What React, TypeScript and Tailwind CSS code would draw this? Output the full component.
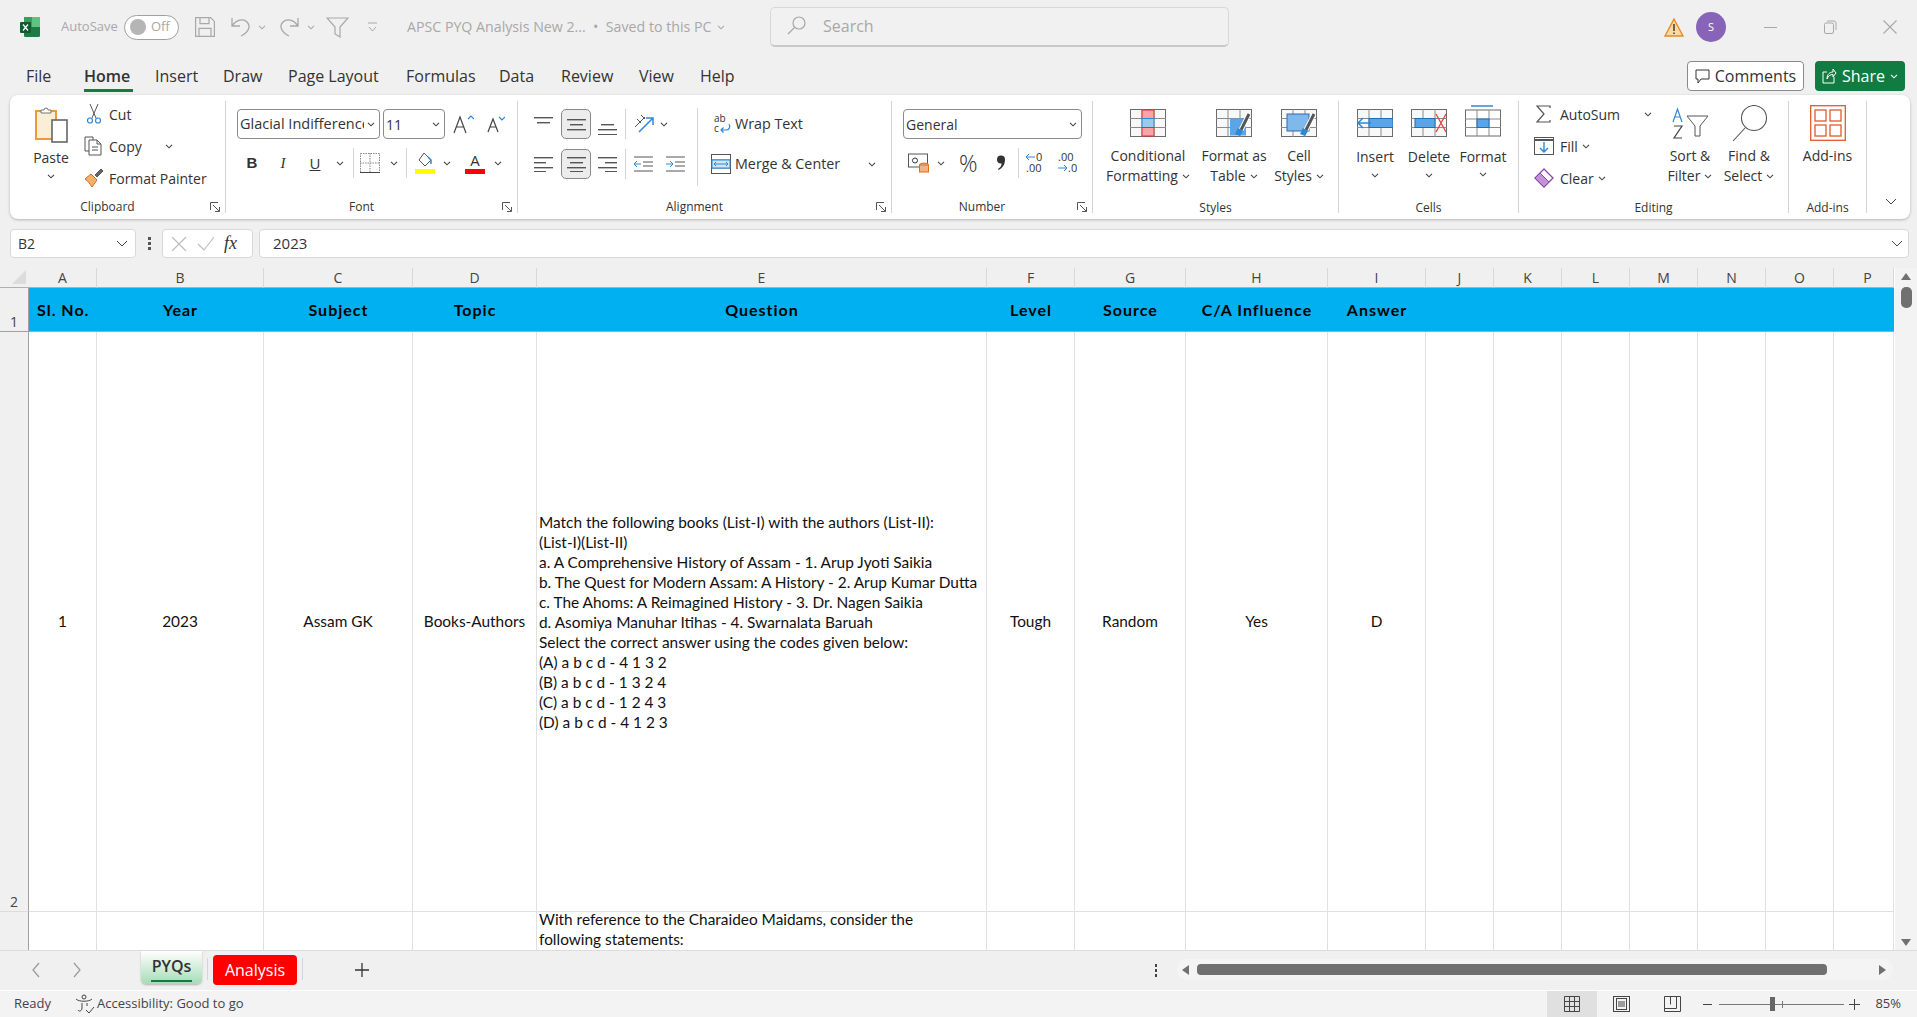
import React from 'react';

const ui = "font-['Open_Sans',sans-serif]";
const sheet = "font-['Lato',sans-serif]";

const Chev = ({ className = '', color = '#444' }: { className?: string; color?: string }) => (
  <svg width="8" height="5" viewBox="0 0 8 5" className={`shrink-0 ${className}`}>
    <path d="M1 .8l3 3 3-3" fill="none" stroke={color} strokeWidth="1.1" />
  </svg>
);

const Launcher = () => (
  <svg width="11" height="11" viewBox="0 0 11 11">
    <path d="M.5 8V.5H8M3 3l6 6M9.500 5v4.500H5" fill="none" stroke="#555" strokeWidth="1" />
  </svg>
);

const Sep = ({ className = '' }: { className?: string }) => <div className={`w-px bg-[#d5d5d5] ${className}`} />;

const Group = ({ w, label, launcher, low, children }: { w: string; label: string; launcher?: boolean; low?: boolean; children: React.ReactNode }) => (
  <div className={`${w} h-full shrink-0 flex flex-col border-r border-[#d4d4d4]`}>
    <div className="flex flex-1 min-h-0">{children}</div>
    <div className={`flex items-center h-[16px] text-[12px] text-[#333] ${low ? '-mb-[3px] pb-[1px]' : '-mb-[2px]'}`}>
      <div className="flex-1 text-center">{label}</div>
      {launcher && (
        <div className="w-[20px] flex justify-center">
          <Launcher />
        </div>
      )}
    </div>
  </div>
);

// horizontal lines of the alignment buttons: [y, x, width]
const Lines = ({ rows }: { rows: [number, number, number][] }) => (
  <svg width="19" height="16" viewBox="0 0 19 16">
    {rows.map(([y, x, w], i) => (
      <rect key={i} x={x} y={y} width={w} height="1.4" fill="#555" />
    ))}
  </svg>
);

const Grid = ({ children, w = 36, h = 28 }: { children?: React.ReactNode; w?: number; h?: number }) => (
  <svg width={w} height={h} viewBox="0 0 36 28">
    <rect x=".5" y=".5" width="35" height="27" fill="#f8f8f8" stroke="#6b6b6b" />
    <path d="M12 0v28M24 0v28M0 9.500h36M0 18.500h36" stroke="#8a8a8a" />
    {children}
  </svg>
);

const Label2 = ({ a, b, className = 'mt-[9px]' }: { a: string; b: string; className?: string }) => (
  <div className={`${className} flex flex-col items-center text-[14px] leading-[20px] text-[#333] whitespace-nowrap`}>
    <div>{a}</div>
    <div className="flex items-center gap-[4px]">
      {b}
      <Chev />
    </div>
  </div>
);

const colHeads = ['A', 'B', 'C', 'D', 'E', 'F', 'G', 'H', 'I', 'J', 'K', 'L', 'M', 'N', 'O', 'P'];
const heads = ['Sl. No.', 'Year', 'Subject', 'Topic', 'Question', 'Level', 'Source', 'C/A Influence', 'Answer', '', '', '', '', '', '', ''];
const question = [
  'Match the following books (List-I) with the authors (List-II):',
  '(List-I)(List-II)',
  'a. A Comprehensive History of Assam - 1. Arup Jyoti Saikia',
  'b. The Quest for Modern Assam: A History - 2. Arup Kumar Dutta',
  'c. The Ahoms: A Reimagined History - 3. Dr. Nagen Saikia',
  'd. Asomiya Manuhar Itihas - 4. Swarnalata Baruah',
  'Select the correct answer using the codes given below:',
  '(A) a b c d - 4 1 3 2',
  '(B) a b c d - 1 3 2 4',
  '(C) a b c d - 1 2 4 3',
  '(D) a b c d - 4 1 2 3',
];
const row2 = ['1', '2023', 'Assam GK', 'Books-Authors', '', 'Tough', 'Random', 'Yes', 'D'];
const tabs = [
  ['File', 'w-[58px]'],
  ['Home', 'w-[71px]'],
  ['Insert', 'w-[68px]'],
  ['Draw', 'w-[65px]'],
  ['Page Layout', 'w-[118px]'],
  ['Formulas', 'w-[93px]'],
  ['Data', 'w-[62px]'],
  ['Review', 'w-[78px]'],
  ['View', 'w-[61px]'],
  ['Help', 'w-[50px]'],
];

const TitleBar = () => (
  <div className="h-[54px] flex items-center text-[14px] text-[#a8a8a8]">
    <svg width="20" height="20" viewBox="0 0 20 20" className="ml-[20px]">
      <rect x="4" width="16" height="20" rx="1.500" fill="#1f7a45" />
      <rect x="12" width="8" height="10" fill="#5fc27e" />
      <rect x="4" width="8" height="10" fill="#33a060" />
      <rect y="5" width="11" height="11" rx="1" fill="#0f5c30" />
      <path d="M3 7.500l5 6M8 7.500l-5 6" stroke="#fff" strokeWidth="1.200" />
    </svg>
    <span className="ml-[21px] w-[63px] text-[13px]">AutoSave</span>
    <div className="w-[55px] h-[25px] rounded-full border border-[#a0a0a0] bg-white flex items-center pl-[5px] gap-[5px]">
      <div className="w-[16px] h-[16px] rounded-full bg-[#b5b5b5]" />
      <span className="text-[13px]">Off</span>
    </div>
    <svg width="20" height="20" viewBox="0 0 20 20" className="ml-[16px]" fill="none" stroke="#a8a8a8" strokeWidth="1.200">
      <path d="M.6.6h15l3.800 3.800v15H.6zM5 .6v6h9v-6M4 19.400v-8h12v8" />
    </svg>
    <svg width="20" height="20" viewBox="0 0 20 20" className="ml-[16px]" fill="none" stroke="#a8a8a8" strokeWidth="1.300">
      <path d="M1 1v8h8M1.500 8.500C5 3 12 1 16 5c4 4 2 10-6 14" />
    </svg>
    <Chev className="ml-[7px]" color="#a8a8a8" />
    <svg width="20" height="20" viewBox="0 0 20 20" className="ml-[13px]" fill="none" stroke="#a8a8a8" strokeWidth="1.300">
      <path d="M19 1v8h-8M18.500 8.500C15 3 8 1 4 5c-4 4-2 10 6 14" />
    </svg>
    <Chev className="ml-[8px]" color="#a8a8a8" />
    <svg width="23" height="21" viewBox="0 0 23 21" className="ml-[11px]" fill="none" stroke="#a8a8a8" strokeWidth="1.200">
      <path d="M1 1h21l-8 9v10l-5-3v-7z" />
    </svg>
    <svg width="9" height="10" viewBox="0 0 9 10" className="ml-[19px]" fill="none" stroke="#a8a8a8">
      <path d="M0 1h9M1 5l3.500 4L8 5" />
    </svg>
    <span className="ml-[30px] w-[304px] whitespace-nowrap text-[14.200px]">APSC PYQ Analysis New 2... &nbsp;•&nbsp; Saved to this PC</span>
    <Chev className="ml-[6px]" color="#a8a8a8" />
    <div className="ml-[45px] w-[459px] h-[40px] rounded-[5px] border border-[#d8d8d8] border-b-2 border-b-[#c8c8c8] bg-[#f1f1f1] flex items-center pl-[16px] pb-[2px] gap-[17px] text-[16px]">
      <svg width="19" height="19" viewBox="0 0 19 19" fill="none" stroke="#a8a8a8" strokeWidth="1.200">
        <circle cx="12" cy="7" r="6" />
        <path d="M7.500 11.500L1 18" />
      </svg>
      Search
    </div>
    <div className="flex-1" />
    <svg width="20" height="19" viewBox="0 0 20 19">
      <path d="M10 1l9 17H1z" fill="#fbd9a5" stroke="#e88a1d" strokeWidth="1.400" />
      <path d="M10 6v7M10 14.500v1.500" stroke="#333" strokeWidth="1.400" />
    </svg>
    <div className="ml-[12px] w-[30px] h-[30px] rounded-full bg-[#8764b8] text-white text-[11px] flex items-center justify-center">S</div>
    <div className="ml-[38px] w-[13px] h-px bg-[#a8a8a8]" />
    <svg width="13" height="14" viewBox="0 0 13 14" className="ml-[47px]" fill="none" stroke="#a8a8a8">
      <rect x=".5" y="3" width="9" height="10.500" rx="1.500" />
      <path d="M3 1h7a2 2 0 0 1 2 2v7" />
    </svg>
    <svg width="14" height="14" viewBox="0 0 14 14" className="ml-[46px] mr-[20px]" stroke="#a8a8a8" strokeWidth="1.100">
      <path d="M.5.5l13 13M13.500.5l-13 13" />
    </svg>
  </div>
);

const MenuBar = () => (
  <div className="h-[41px] pl-[26px] flex text-[16px] text-[#333]">
    {tabs.map(([t, w]) => (
      <div key={t} className={`${w} h-[38px] pt-[11px] leading-[22px] whitespace-nowrap`}>
        {t === 'Home' ? <div className="w-[49px] h-[27px] font-semibold border-b-[3px] border-[#107c41]">{t}</div> : t}
      </div>
    ))}
    <div className="flex-1" />
    <div className="mt-[7px] h-[30px] w-[117px] rounded-[4px] border border-[#8a8a8a] bg-white flex items-center justify-center gap-[5px]">
      <svg width="15" height="15" viewBox="0 0 15 15" fill="none" stroke="#333">
        <path d="M1 1h13v9H6l-3 4v-4H1z" />
      </svg>
      Comments
    </div>
    <div className="ml-[11px] mr-[12px] mt-[7px] h-[30px] w-[90px] rounded-[4px] bg-[#107c41] text-white flex items-center justify-center gap-[5px]">
      <svg width="15" height="16" viewBox="0 0 15 16" fill="none" stroke="#fff">
        <path d="M5 4H1v11h11V9M5 11c0-5 3-7 6-7V1l3 4-3 4V6.500c-3 0-5 1.500-6 4.500z" />
      </svg>
      Share
      <Chev color="#fff" />
    </div>
  </div>
);

const Clipboard = () => (
  <Group w="w-[216px]" label="Clipboard" launcher>
    <div className="ml-[21px] w-[40px] flex flex-col items-center text-[14px] text-[#333]">
      <svg width="33" height="37" viewBox="0 0 33 37" className="mt-[5px]">
        <rect x="1" y="5" width="20" height="28" fill="#fbeed7" stroke="#e89a3c" strokeWidth="2" />
        <path d="M6 7V4h3a2 2 0 0 1 4 0h3v3z" fill="#fff" stroke="#777" />
        <rect x="17" y="14" width="15" height="22" fill="#fff" stroke="#666" strokeWidth="1.600" />
      </svg>
      <div className="mt-[5px] leading-[20px]">Paste</div>
      <Chev className="mt-[6px]" />
    </div>
    <div className="ml-[13px] -mt-[1px] flex flex-col text-[14px] text-[#333]">
      <div className="h-[28px] flex items-center">
        <svg width="20" height="20" viewBox="0 0 20 20" fill="none">
          <path d="M6 0l6 14M14 0L8 14" stroke="#555" />
          <circle cx="6" cy="16.500" r="2.500" stroke="#2b88d8" strokeWidth="1.200" />
          <circle cx="14" cy="16.500" r="2.500" stroke="#2b88d8" strokeWidth="1.200" />
        </svg>
        <span className="ml-[5px]">Cut</span>
      </div>
      <div className="mt-[4px] h-[28px] flex items-center">
        <svg width="20" height="20" viewBox="0 0 20 20" fill="none" stroke="#555">
          <path d="M5 15H1V1h8v3M5 4h8l4 4v11H5zM13 4v4h4M8 11h6M8 14h6" />
        </svg>
        <span className="ml-[5px] w-[56px]">Copy</span>
        <Chev />
      </div>
      <div className="mt-[4px] h-[28px] flex items-center">
        <svg width="20" height="20" viewBox="0 0 20 20">
          <path d="M1 11l6-5 6 6-5 7C6 16 4 13 1 11z" fill="#f7b267" stroke="#d2691e" />
          <path d="M11 7l6-6 2 2-6 6z" fill="#666" stroke="#555" />
        </svg>
        <span className="ml-[5px] whitespace-nowrap">Format Painter</span>
      </div>
    </div>
  </Group>
);

const Combo = ({ w, text }: { w: string; text: string }) => (
  <div className={`${w} h-[30px] rounded-[4px] border border-[#8a8a8a] bg-white flex items-center pl-[2px] pr-[4px] text-[#333] overflow-hidden`}>
    <span className="flex-1 overflow-hidden whitespace-nowrap">{text}</span>
    <Chev className="ml-[3px]" />
  </div>
);

const ChevCell = ({ className = '' }: { className?: string }) => (
  <div className={`w-[18px] flex justify-center ${className}`}>
    <Chev />
  </div>
);

const Font = () => (
  <Group w="w-[292px]" label="Font" launcher>
    <div className="pl-[11px] pt-[8px] flex flex-col gap-[9px] text-[#333]">
      <div className="flex items-center">
        <Combo w="w-[143px] text-[14.500px]" text="Glacial Indifference" />
        <Combo w="ml-[3px] w-[62px] text-[14px]" text="11" />
        <svg width="21" height="20" viewBox="0 0 21 20" className="ml-[8px]" fill="none" stroke="#444" strokeWidth="1.200">
          <path d="M1 19L7 3l6 16M3.500 13h7" />
          <path d="M15 5l3-3 3 3" stroke="#2b88d8" />
        </svg>
        <svg width="18" height="18" viewBox="0 0 18 18" className="ml-[13px]" fill="none" stroke="#444" strokeWidth="1.200">
          <path d="M1 17L6 4l5 13M3 12h6" />
          <path d="M12 2l3 3 3-3" stroke="#2b88d8" />
        </svg>
      </div>
      <div className="flex items-center h-[30px] text-[15px]">
        <div className="w-[30px] text-center font-['Liberation_Sans',sans-serif] font-bold">B</div>
        <div className="w-[32px] text-center font-['Liberation_Serif',serif] italic">I</div>
        <div className="w-[32px] text-center underline">U</div>
        <ChevCell />
        <Sep className="ml-[4px] h-[30px]" />
        <svg width="20" height="20" viewBox="0 0 20 20" className="ml-[6px]" fill="none" stroke="#888" strokeDasharray="1.500 1">
          <rect x=".5" y=".5" width="19" height="19" />
          <path d="M10 0v20M0 10h20" />
          <path d="M0 19.500h20" stroke="#444" strokeDasharray="none" />
        </svg>
        <ChevCell className="ml-[5px]" />
        <Sep className="ml-[3px] h-[30px]" />
        <svg width="20" height="22" viewBox="0 0 20 22" className="ml-[8px]">
          <path d="M9 1l7 7-6 6-6-6z" fill="#fff" stroke="#555" />
          <path d="M13 5l3 3v4" fill="none" stroke="#2b88d8" strokeWidth="1.500" />
          <rect y="17" width="20" height="5" fill="#ffff00" />
        </svg>
        <ChevCell className="ml-[3px]" />
        <div className="ml-[9px] w-[20px] flex flex-col items-center leading-[17px]">
          A<div className="w-[20px] h-[5px] bg-[#ff0000]" />
        </div>
        <ChevCell className="ml-[4px]" />
      </div>
    </div>
  </Group>
);

const Alignment = () => (
  <Group w="w-[374px]" label="Alignment" launcher>
    <div className="pl-[16px] pt-[8px] w-[179px] flex flex-col gap-[10px]">
      <div className="flex items-center h-[30px]">
        <div className="w-[19px]">
          <Lines rows={[[1, 0, 19], [6, 3, 13]]} />
        </div>
        <div className="ml-[8px] w-[30px] h-[30px] rounded-[5px] border border-[#8a8a8a] bg-[#ececec] flex items-center justify-center">
          <Lines rows={[[3, 0, 19], [8, 3, 13], [13, 0, 19]]} />
        </div>
        <div className="ml-[7px] w-[19px] mt-[6px]">
          <Lines rows={[[5, 3, 13], [10, 0, 19], [15, 0, 19]]} />
        </div>
        <Sep className="ml-[8px] h-[30px]" />
        <svg width="20" height="20" viewBox="0 0 20 20" className="ml-[8px]" fill="none">
          <path d="M1 13L11 3M3 5l4 4M7 1l4 4" stroke="#555" />
          <path d="M5 18L18 5M12 4h7v7" stroke="#2b88d8" strokeWidth="1.500" />
        </svg>
        <Chev className="ml-[6px]" />
      </div>
      <div className="flex items-center h-[30px]">
        <div className="w-[19px]">
          <Lines rows={[[1, 0, 19], [6, 0, 12], [11, 0, 19], [15, 0, 12]]} />
        </div>
        <div className="ml-[8px] w-[30px] h-[30px] rounded-[5px] border border-[#8a8a8a] bg-[#ececec] flex items-center justify-center">
          <Lines rows={[[1, 0, 19], [6, 3, 13], [11, 0, 19], [15, 3, 13]]} />
        </div>
        <div className="ml-[7px] w-[19px]">
          <Lines rows={[[1, 0, 19], [6, 7, 12], [11, 0, 19], [15, 7, 12]]} />
        </div>
        <Sep className="ml-[8px] h-[30px]" />
        <svg width="19" height="16" viewBox="0 0 19 16" className="ml-[8px]">
          <path d="M0 1h19M9 6h10M9 10h10M0 15h19" stroke="#555" />
          <path d="M7 8H0M3 5L0 8l3 3" stroke="#2b88d8" fill="none" />
        </svg>
        <svg width="19" height="16" viewBox="0 0 19 16" className="ml-[13px]">
          <path d="M0 1h19M9 6h10M9 10h10M0 15h19" stroke="#555" />
          <path d="M0 8h7M4 5l3 3-3 3" stroke="#2b88d8" fill="none" />
        </svg>
      </div>
    </div>
    <Sep className="mt-[7px] h-[78px]" />
    <div className="ml-[13px] pt-[8px] flex flex-col gap-[10px] text-[14.300px] text-[#333]">
      <div className="flex items-center h-[30px]">
        <svg width="20" height="20" viewBox="0 0 20 20" className="ml-[2px] mr-[2px]" fill="none">
          <text x="1" y="8" fontSize="10" fill="#333" fontFamily="Open Sans">ab</text>
          <text x="1" y="18" fontSize="10" fill="#333" fontFamily="Open Sans">c</text>
          <path d="M16 10c2 3 0 6-3 6H8M10.500 13.500L8 16l2.500 2.500" stroke="#2b88d8" strokeWidth="1.200" />
        </svg>
        Wrap Text
      </div>
      <div className="flex items-center h-[30px]">
        <svg width="20" height="20" viewBox="0 0 20 20" className="mr-[4px]">
          <rect x=".5" y=".5" width="19" height="19" fill="#fff" stroke="#555" />
          <path d="M0 6h20M0 14h20" stroke="#555" />
          <rect x="1" y="6" width="18" height="8" fill="#cfe6f7" stroke="#2b88d8" />
          <path d="M3 10h14M5 8l-2 2 2 2M15 8l2 2-2 2" stroke="#2b88d8" fill="none" />
        </svg>
        <span className="w-[133px] whitespace-nowrap">Merge &amp; Center</span>
        <Chev />
      </div>
    </div>
  </Group>
);

const NumberGroup = () => (
  <Group w="w-[201px]" label="Number" launcher>
    <div className="pl-[11px] pt-[8px] flex flex-col gap-[9px]">
      <Combo w="w-[179px] text-[14px]" text="General" />
      <div className="flex items-center h-[30px] text-[#333]">
        <svg width="22" height="22" viewBox="0 0 22 22" className="ml-[5px]" fill="none">
          <rect x=".5" y="2" width="19" height="13" fill="#fff" stroke="#555" />
          <circle cx="7" cy="8.500" r="2.500" stroke="#333" />
          <ellipse cx="16" cy="13" rx="4.500" ry="2" fill="#f4b183" stroke="#d9701c" />
          <rect x="11.500" y="13" width="9" height="7" fill="#f4b183" stroke="#d9701c" />
        </svg>
        <Chev className="ml-[7px]" />
        <span className="ml-[14px] w-[20px] text-[23px] leading-none font-light">%</span>
        <svg width="10" height="16" viewBox="0 0 10 16" className="ml-[17px]">
          <circle cx="5" cy="4.500" r="4" fill="#333" />
          <path d="M8.500 5c1 4-2 8-6 10l-.5-1c3-2 4-4 3.500-7z" fill="#333" />
        </svg>
        <Sep className="ml-[12px] h-[30px]" />
        <svg width="20" height="22" viewBox="0 0 20 22" className="ml-[6px]">
          <text x="11" y="9" fontSize="11" fill="#333" fontFamily="Open Sans">0</text>
          <text x="1" y="20" fontSize="11" fill="#333" fontFamily="Open Sans">.00</text>
          <path d="M10 5H1M4 2L1 5l3 3" fill="none" stroke="#2b88d8" />
        </svg>
        <svg width="20" height="22" viewBox="0 0 20 22" className="ml-[12px]">
          <text x="1" y="9" fontSize="11" fill="#333" fontFamily="Open Sans">.00</text>
          <text x="11" y="20" fontSize="11" fill="#333" fontFamily="Open Sans">.0</text>
          <path d="M1 16h9M7 13l3 3-3 3" fill="none" stroke="#2b88d8" />
        </svg>
      </div>
    </div>
  </Group>
);

const Brush = () => (
  <>
    <path d="M25 21l8-16" stroke="#fff" strokeWidth="5" />
    <path d="M25 21l8-16" stroke="#555" strokeWidth="3" />
    <path d="M22 19l5 3-3 5-5-2z" fill="#2b88d8" />
  </>
);

const Styles = () => (
  <Group w="w-[246px]" label="Styles" low>
    <div className="pl-[15px] pt-[8px] flex">
      <div className="w-[80px] flex flex-col items-center">
        <Grid>
          <rect x="12" y="1" width="12" height="8.500" fill="#f8a5a8" stroke="#d13438" />
          <rect x="12" y="9.500" width="12" height="9" fill="#9cc9ee" stroke="#2b88d8" />
          <rect x="12" y="18.500" width="12" height="8.500" fill="#f8a5a8" stroke="#d13438" />
        </Grid>
        <Label2 a="Conditional" b="Formatting" />
      </div>
      <div className="w-[92px] flex flex-col items-center">
        <Grid>
          <rect x="14" y="9.500" width="16" height="17" fill="#5ba4e6" />
          <Brush />
        </Grid>
        <Label2 a="Format as" b="Table" />
      </div>
      <div className="w-[38px] flex flex-col items-center">
        <Grid>
          <rect x="6" y="5" width="22" height="17" fill="#7fb8ea" stroke="#2b6cb0" />
          <Brush />
        </Grid>
        <Label2 a="Cell" b="Styles" />
      </div>
    </div>
  </Group>
);

const CellBtn = ({ label, icon, format }: { label: string; icon: React.ReactNode; format?: boolean }) => (
  <div className="w-[54px] flex flex-col items-center text-[14px] text-[#333]">
    {icon}
    <div className="mt-[10px] leading-[20px]">{label}</div>
    <Chev className={format ? 'mt-[5px]' : 'mt-[6px]'} />
  </div>
);

const Cells = () => (
  <Group w="w-[180px]" label="Cells" low>
    <div className="pl-[9px] pt-[8px] flex">
      <CellBtn
        label="Insert"
        icon={
          <Grid>
            <rect x="12" y="9.500" width="24" height="9" fill="#5ba4e6" stroke="#1f6fb5" />
            <path d="M14 14H2M6 9l-5 5 5 5" fill="none" stroke="#2b88d8" strokeWidth="1.500" />
          </Grid>
        }
      />
      <CellBtn
        label="Delete"
        icon={
          <Grid>
            <rect x="4" y="9.500" width="20" height="9" fill="#5ba4e6" stroke="#1f6fb5" />
            <path d="M25 5l10 18M35 5L25 23" stroke="#e8403f" strokeWidth="1.300" />
          </Grid>
        }
      />
      <CellBtn
        format
        label="Format"
        icon={
          <svg width="36" height="32" viewBox="0 0 36 32" className="-mt-[4px]">
            <path d="M6 1h22" stroke="#2b88d8" strokeWidth="1.500" />
            <rect x=".5" y="5" width="35" height="26" fill="#fff" stroke="#6b6b6b" />
            <path d="M12 5v26M24 5v26M0 14h36M0 22.500h36" stroke="#8a8a8a" />
            <rect x="12" y="14" width="12" height="8.500" fill="#5ba4e6" stroke="#1f6fb5" />
          </svg>
        }
      />
    </div>
  </Group>
);

const Editing = () => (
  <Group w="w-[270px]" label="Editing" low>
    <div className="pl-[15px] -mt-[1px] w-[141px] flex flex-col text-[14px] text-[#333]">
      <div className="h-[28px] flex items-center">
        <svg width="20" height="18" viewBox="0 0 20 18" fill="none" stroke="#555" strokeWidth="1.200">
          <path d="M16 3V1H3l7 8-7 8h13v-2" />
        </svg>
        <span className="ml-[6px] w-[84px]">AutoSum</span>
        <Chev />
      </div>
      <div className="mt-[4px] h-[28px] flex items-center">
        <svg width="20" height="18" viewBox="0 0 20 18" fill="none">
          <rect x=".5" y=".5" width="19" height="17" fill="#fff" stroke="#555" />
          <path d="M0 3h20" stroke="#555" strokeWidth="2" />
          <path d="M10 5v10M6 11l4 4 4-4" stroke="#2b88d8" strokeWidth="1.400" />
        </svg>
        <span className="ml-[6px]">Fill</span>
        <Chev className="ml-[4px]" />
      </div>
      <div className="mt-[4px] h-[28px] flex items-center">
        <svg width="20" height="20" viewBox="0 0 20 20">
          <path d="M10 1l9 9-9 9-9-9z" fill="#fff" stroke="#8e44ad" strokeWidth="1.300" />
          <path d="M1 10l5-5 9 9-5 5z" fill="#c391d6" stroke="#8e44ad" />
        </svg>
        <span className="ml-[6px]">Clear</span>
        <Chev className="ml-[4px]" />
      </div>
    </div>
    <div className="w-[60px] flex flex-col items-center">
      <svg width="37" height="33" viewBox="0 0 37 33" className="mt-[6px]" fill="none">
        <path d="M1 15l4.500-13L10 15M2.500 10h6" stroke="#2b88d8" strokeWidth="1.200" />
        <path d="M2 19h8l-8 12h8" stroke="#444" strokeWidth="1.200" />
        <path d="M15 9h21l-8 10v10h-5V19z" stroke="#555" fill="#fff" />
      </svg>
      <Label2 a="Sort &" b="Filter" className="mt-[6px]" />
    </div>
    <div className="w-[58px] flex flex-col items-center">
      <svg width="37" height="37" viewBox="0 0 37 37" className="mt-[4px]" fill="none" stroke="#555" strokeWidth="1.100">
        <circle cx="23" cy="13" r="12.500" fill="#fff" />
        <path d="M14 23L2 36" />
      </svg>
      <Label2 a="Find &" b="Select" className="mt-[4px]" />
    </div>
  </Group>
);

const AddIns = () => (
  <Group w="w-[78px]" label="Add-ins" low>
    <div className="w-full pt-[4px] flex flex-col items-center text-[14px] text-[#333]">
      <svg width="36" height="36" viewBox="0 0 36 36" fill="none" stroke="#e05a2b" strokeWidth="1.300">
        <rect x=".7" y=".7" width="34.600" height="34.600" />
        <rect x="5" y="5" width="11" height="11" />
        <rect x="20" y="5" width="11" height="11" />
        <rect x="5" y="20" width="11" height="11" />
        <rect x="20" y="20" width="11" height="11" />
      </svg>
      <div className="mt-[5px] leading-[20px]">Add-ins</div>
    </div>
  </Group>
);

const Ribbon = () => (
  <div className="mr-[7px] ml-[10px] h-[124px] rounded-[8px] bg-white shadow-[0_1px_3px_rgba(0,0,0,0.25)] py-[6px] flex">
    <Clipboard />
    <Font />
    <Alignment />
    <NumberGroup />
    <Styles />
    <Cells />
    <Editing />
    <AddIns />
    <div className="flex-1 pl-[18px] flex items-end pb-[8px]">
      <svg width="12" height="7" viewBox="0 0 12 7" fill="none" stroke="#444">
        <path d="M1 1l5 5 5-5" />
      </svg>
    </div>
  </div>
);

const FormulaBar = () => (
  <div className="h-[49px] pt-[10px] pl-[10px] pr-[8px] flex text-[14px] text-[#333]">
    <div className="w-[126px] h-[29px] rounded-[4px] border border-[#d8d8d8] bg-white flex items-center pl-[7px] pr-[7px]">
      <span className="flex-1">B2</span>
      <svg width="12" height="7" viewBox="0 0 12 7" fill="none" stroke="#444">
        <path d="M1 1l5 5 5-5" />
      </svg>
    </div>
    <div className="w-[26px] h-[29px] flex flex-col items-center justify-center gap-[2px]">
      <div className="w-[3px] h-[3px] bg-[#555]" />
      <div className="w-[3px] h-[3px] bg-[#555]" />
      <div className="w-[3px] h-[3px] bg-[#555]" />
    </div>
    <div className="w-[91px] h-[29px] rounded-[4px] border border-[#d8d8d8] bg-white flex items-center pl-[8px]">
      <svg width="16" height="16" viewBox="0 0 16 16" stroke="#bbb" strokeWidth="1.100">
        <path d="M1 1l14 14M15 1L1 15" />
      </svg>
      <svg width="18" height="16" viewBox="0 0 18 16" className="ml-[10px]" fill="none" stroke="#bbb" strokeWidth="1.100">
        <path d="M1 8l6 6L17 1" />
      </svg>
      <span className="ml-[9px] font-['Liberation_Serif',serif] italic text-[18px] text-[#333]">fx</span>
    </div>
    <div className="ml-[6px] flex-1 h-[29px] rounded-[4px] border border-[#d8d8d8] bg-white flex items-center pl-[13px] pr-[5px] text-[15px]">
      <span className="flex-1">2023</span>
      <svg width="12" height="7" viewBox="0 0 12 7" fill="none" stroke="#444">
        <path d="M1 1l5 5 5-5" />
      </svg>
    </div>
  </div>
);

const SheetGrid = () => (
  <div className="flex h-[682px]">
    <div className="w-[1895px] overflow-hidden grid grid-cols-[29px_68px_167px_149px_124px_450px_88px_111px_142px_98px_repeat(6,68px)_60px] grid-rows-[20px_44px_580px_38px] bg-white">
      <div className="bg-[#f0f0f0] border-b border-[#b0b0b0] flex items-end justify-end pr-[3px] pb-[3px]">
        <div className="w-0 h-0 border-l-[14px] border-l-transparent border-b-[14px] border-b-[#dcdcdc]" />
      </div>
      {colHeads.map((c) => (
        <div key={c} className={`bg-[#f0f0f0] border-b border-b-[#b0b0b0] border-r border-r-[#d9d9d9] text-[14px] text-[#444] flex items-center justify-center ${c === 'P' ? 'pl-[8px]' : ''}`}>
          {c}
        </div>
      ))}
      <div className="bg-[#f0f0f0] border-b border-[#a0a0a0] border-r text-[14px] text-[#444] flex items-end pl-[10px] leading-[18px]">1</div>
      {heads.map((h, i) => (
        <div key={i} className={`bg-[#00b0f0] border-b border-[#a8a8a8] flex items-center text-[16px] font-bold text-black tracking-[1px] whitespace-nowrap ${sheet} ${i === 0 ? 'justify-start pl-[8px]' : 'justify-center'}`}>
          {h}
        </div>
      ))}
      <div className="bg-[#f0f0f0] border-b border-[#dcdcdc] border-r border-r-[#a0a0a0] text-[14px] text-[#444] flex items-end pl-[10px] leading-[18px]">2</div>
      {colHeads.map((c, i) => (
        <div key={c} className={`border-b border-r border-[#e0e0e0] flex items-center justify-center text-[15.400px] text-[#111] whitespace-nowrap ${sheet}`}>
          {i === 4 ? (
            <div className="w-full pl-[2px] leading-[20px]">
              {question.map((q) => (
                <div key={q}>{q}</div>
              ))}
            </div>
          ) : (
            row2[i]
          )}
        </div>
      ))}
      <div className="bg-[#f0f0f0] border-r border-r-[#a0a0a0]" />
      {colHeads.map((c, i) => (
        <div key={c} className={`border-r border-[#e0e0e0] text-[15.400px] text-[#111] leading-[20px] overflow-hidden ${sheet}`}>
          {i === 4 && (
            <div className="pl-[2px] -mt-[3px] whitespace-nowrap">
              <div>With reference to the Charaideo Maidams, consider the</div>
              <div>following statements:</div>
            </div>
          )}
        </div>
      ))}
    </div>
    <div className="flex-1 bg-[#f3f3f3] flex flex-col items-center pt-[5px]">
      <div className="w-0 h-0 border-x-[5px] border-x-transparent border-b-[7px] border-b-[#707070]" />
      <div className="mt-[7px] w-[11px] h-[21px] rounded-[5px] bg-[#707070]" />
      <div className="flex-1" />
      <div className="mb-[4px] w-0 h-0 border-x-[5px] border-x-transparent border-t-[7px] border-t-[#707070]" />
    </div>
  </div>
);

const TabBar = () => (
  <div className="h-[40px] border-t border-[#dcdcdc] bg-[#f0f0f0] flex text-[#333]">
    <svg width="10" height="16" viewBox="0 0 10 16" className="ml-[31px] mt-[11px]" fill="none" stroke="#999" strokeWidth="1.200">
      <path d="M8 1L2 8l6 7" />
    </svg>
    <svg width="10" height="16" viewBox="0 0 10 16" className="ml-[31px] mt-[11px]" fill="none" stroke="#999" strokeWidth="1.200">
      <path d="M2 1l6 7-6 7" />
    </svg>
    <div className="ml-[59px] w-[61px] h-[33px] rounded-b-[5px] bg-gradient-to-b from-white to-[#a3dcb6] shadow-[0_1px_2px_rgba(0,0,0,0.25)] flex flex-col items-center">
      <div className="pt-[1px] text-[16px] leading-[28px] font-semibold text-[#333]">PYQs</div>
      <div className="w-[41px] h-[2px] bg-[#107c41]" />
    </div>
    <Sep className="ml-[5px] mt-[7px] h-[22px]" />
    <div className="ml-[5px] mt-[4px] w-[84px] h-[30px] rounded-[4px] bg-[#ff0000] text-white text-[16px] flex items-center justify-center">Analysis</div>
    <Sep className="ml-[5px] mt-[7px] h-[22px]" />
    <svg width="16" height="16" viewBox="0 0 16 16" className="ml-[51px] mt-[11px]" stroke="#333" strokeWidth="1.300">
      <path d="M8 1v14M1 8h14" />
    </svg>
    <div className="ml-[784px] w-[4px] flex flex-col items-center justify-center gap-[2px] h-[38px]">
      <div className="w-[2px] h-[3px] bg-[#444]" />
      <div className="w-[2px] h-[3px] bg-[#444]" />
      <div className="w-[2px] h-[3px] bg-[#444]" />
    </div>
    <div className="ml-[19px] mt-[8px] w-[716px] h-[21px] rounded-full bg-[#f4f4f4] flex items-center pl-[5px] pr-[7px]">
      <div className="w-0 h-0 border-y-[5px] border-y-transparent border-r-[7px] border-r-[#707070]" />
      <div className="ml-[8px] w-[630px] h-[11px] rounded-[4px] bg-[#707070]" />
      <div className="flex-1" />
      <div className="w-0 h-0 border-y-[5px] border-y-transparent border-l-[7px] border-l-[#707070]" />
    </div>
  </div>
);

const StatusBar = () => (
  <div className="h-[27px] border-t border-white bg-[#f3f3f3] flex items-center text-[13px] text-[#444]">
    <span className="ml-[14px]">Ready</span>
    <svg width="20" height="20" viewBox="0 0 20 20" className="ml-[24px]" fill="none" stroke="#444">
      <circle cx="9" cy="3" r="2" />
      <path d="M1 5c3 3 13 3 16 0M7 9v5c0 3-3 4-4 2M12 9v3M11 16l3 3 5-6" />
    </svg>
    <span className="ml-[2px]">Accessibility: Good to go</span>
    <div className="flex-1" />
    <div className="w-[50px] h-[26px] bg-[#e0e0e0] flex items-center justify-center">
      <svg width="16" height="16" viewBox="0 0 16 16" fill="none" stroke="#444">
        <path d="M.5.5h15v15H.5zM5.500 0v16M10.500 0v16M0 5.500h16M0 10.500h16" />
      </svg>
    </div>
    <svg width="17" height="16" viewBox="0 0 17 16" className="ml-[16px]" fill="none" stroke="#444">
      <rect x=".5" y=".5" width="16" height="15" />
      <rect x="3.500" y="2.500" width="10" height="11" />
      <path d="M5 6h7M5 8h7M5 10h7" />
    </svg>
    <svg width="17" height="16" viewBox="0 0 17 16" className="ml-[34px]" fill="none" stroke="#444">
      <path d="M.5.5h16v15H.5zM.5 12.500h12V.5M6.500.5v8" />
    </svg>
    <div className="ml-[22px] w-[9px] h-px bg-[#444]" />
    <div className="ml-[7px] w-[125px] h-[13px] flex items-center relative">
      <div className="w-full h-px bg-[#777]" />
      <div className="absolute left-[51px] w-[5px] h-[14px] bg-[#666]" />
      <div className="absolute left-[63px] w-px h-[7px] bg-[#777]" />
    </div>
    <svg width="11" height="11" viewBox="0 0 11 11" className="ml-[5px]" stroke="#444">
      <path d="M5.500 0v11M0 5.500h11" />
    </svg>
    <span className="ml-[15px] mr-[16px]">85%</span>
  </div>
);

export default function App() {
  return (
    <div className={`w-[1917px] h-[1017px] overflow-hidden bg-[#f0f0f0] flex flex-col ${ui}`}>
      <TitleBar />
      <MenuBar />
      <Ribbon />
      <FormulaBar />
      <SheetGrid />
      <TabBar />
      <StatusBar />
    </div>
  );
}
